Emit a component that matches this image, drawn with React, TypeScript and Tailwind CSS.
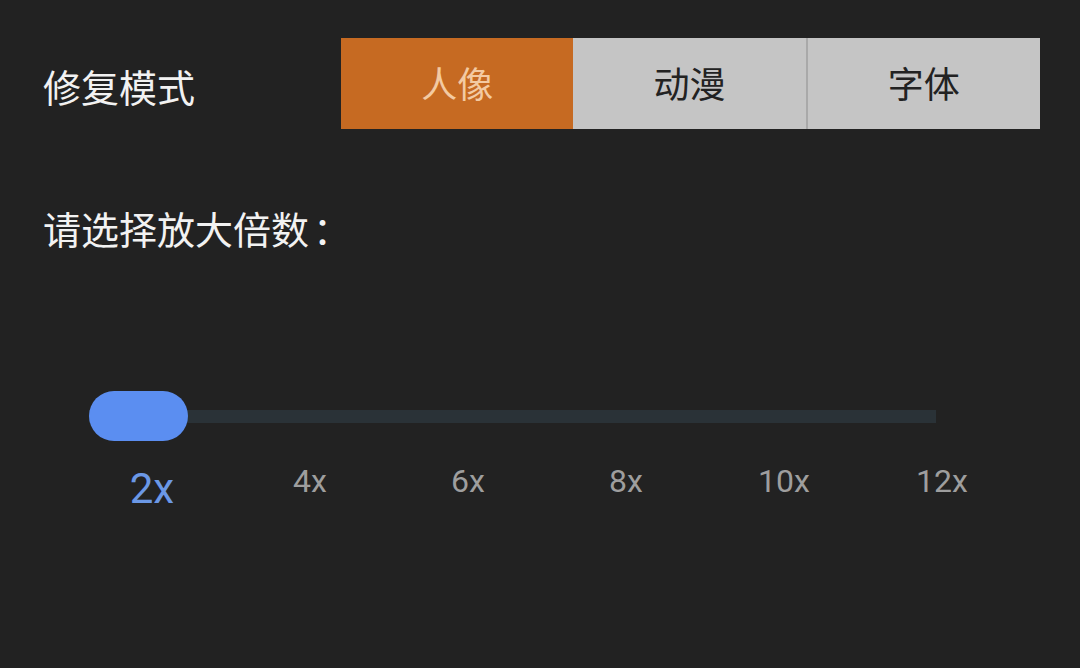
import { useState } from "react";

const modes = ["人像", "动漫", "字体"];
const scales = ["2x", "4x", "6x", "8x", "10x", "12x"];

const cjk = "font-['Noto_Sans_CJK_SC','Noto_Sans',sans-serif]";

export default function App() {
  const [mode, setMode] = useState(0);
  const [scale, setScale] = useState(0);

  return (
    <div className={`w-[1080px] h-[668px] bg-[#222222] overflow-hidden ${cjk}`}>
      {/* mode row */}
      <div className="flex items-center pt-[38px] pl-[43px]">
        <div className="w-[298px] mt-[5px] text-[38px] leading-none text-[#f2f2f2]">
          修复模式
        </div>
        <div className="flex w-[699px] h-[91px]">
          {modes.map((m, i) => (
            <button
              key={m}
              onClick={() => setMode(i)}
              className={
                "flex-1 flex items-center justify-center text-[36px] leading-none pb-[3px] " +
                (i === mode
                  ? "bg-[#c66a22] text-[#f3caa2]"
                  : "bg-[#c5c5c5] text-[#222222]") +
                (i === 2 ? " border-l-2 border-[#a9a9a9]" : "")
              }
            >
              {m}
            </button>
          ))}
        </div>
      </div>

      <div className="pl-[43px] mt-[80px] text-[38px] leading-none text-[#f2f2f2]">
        请选择放大倍数<span className="ml-[4px]">：</span>
      </div>

      {/* slider */}
      <div className="relative ml-[89px] mt-[144px] w-[847px] h-[50px]">
        <div className="absolute left-0 right-0 top-[19px] h-[13px] bg-[#2a3237]" />
        <div
          className="absolute top-0 h-[50px] w-[99px] rounded-full bg-[#5b8ef1]"
          style={{ left: scale * 150 }}
        />
      </div>

      <div className="flex ml-[73px] mt-[24px] font-['Roboto',sans-serif]">
        {scales.map((s, i) => (
          <button
            key={s}
            onClick={() => setScale(i)}
            className={
              "w-[158px] flex justify-center leading-none " +
              (i === scale
                ? "text-[42px] text-[#6b98e6] mt-[3px]"
                : "text-[32px] text-[#9e9e9e]")
            }
          >
            {s}
          </button>
        ))}
      </div>
    </div>
  );
}
